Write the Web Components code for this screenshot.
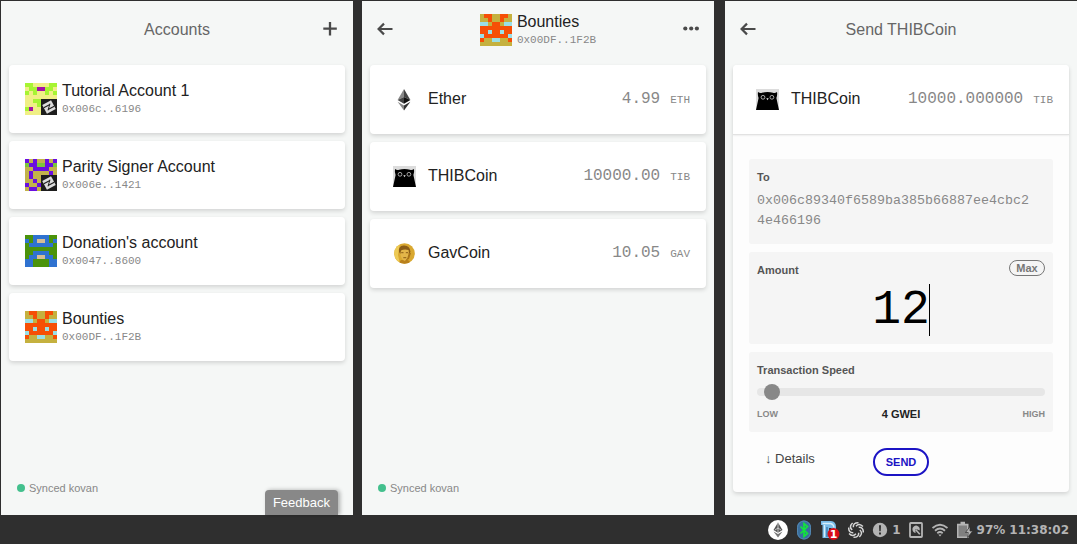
<!DOCTYPE html>
<html lang="en">
<head>
<meta charset="utf-8">
<title>Wallet</title>
<style>
html, body { margin: 0; background: #2f2f2f; }
body { font-family: "Liberation Sans", Arial, sans-serif; color: #222; }
</style>
</head>
<body>
<wallet-desktop></wallet-desktop>

<script>
const define = (name, html, setup) => customElements.define(name, class extends HTMLElement {
  connectedCallback() {
    if (this.shadowRoot) return;
    const root = this.attachShadow({ mode: 'open' });
    root.innerHTML = html;
    if (setup) setup(this, root);
  }
});

/* Mirrored 8x8 block avatar. "rows" holds the left half, one digit per colour. */
const AVATARS = {
  tutorial: { colors: ['#f0ef86', '#a6f432', '#a311a8'], rows: ['1100', '0112', '1010', '0000', '0011', '0001', '1200', '0000'] },
  signer: { colors: ['#c2b34b', '#6a0fe0', '#7cc63a'], rows: ['1010', '2112', '0011', '0100', '0100', '0010', '1001', '0110'] },
  donation: { colors: ['#4b930b', '#2f72d0', '#d6bd95'], rows: ['0011', '1012', '0111', '0000', '0011', '0112', '1100', '1100'] },
  bounties: { colors: ['#c5b13f', '#f64f06', '#9adfe6'], rows: ['0110', '0010', '2201', '1111', '1121', '2111', '1002', '0000'] }
};

define('block-avatar', `
<style>:host{display:block;width:32px;height:32px;flex:none}svg{display:block}</style>
<svg width="32" height="32" viewBox="0 0 32 32" aria-hidden="true"></svg>`, (el, root) => {
  const { colors, rows } = AVATARS[el.getAttribute('kind')];
  let out = '';
  rows.forEach((row, y) => {
    const full = row + [...row].reverse().join('');
    [...full].forEach((c, x) => {
      out += `<rect x="${x * 4}" y="${y * 4}" width="4" height="4" fill="${colors[c]}" shape-rendering="crispEdges"/>`;
    });
  });
  if (el.hasAttribute('signed')) out += `
    <rect x="16" y="16" width="16" height="16" fill="#1d1d1d"/>
    <g transform="rotate(-28 24 24)"><rect x="19" y="19" width="10" height="10" fill="#ddd"/>
    <path d="M19 22.2h7M22 25.8h7" stroke="#1d1d1d" stroke-width="1.1"/><path d="M26.5 21.5l-5 5" stroke="#1d1d1d" stroke-width=".9"/></g>`;
  root.querySelector('svg').innerHTML = out;
});

define('account-label', `
<style>
:host{display:flex;align-items:center;gap:5px}
.name{font-size:16px;line-height:20px;color:#222}
.addr{font:11px/16px "Liberation Mono",monospace;color:#888}
</style>
<div class="text"><div class="name"></div><div class="addr"></div></div>`, (el, root) => {
  root.querySelector('.name').textContent = el.getAttribute('name');
  root.querySelector('.addr').textContent = el.getAttribute('address');
  const avatar = document.createElement('block-avatar');
  avatar.setAttribute('kind', el.getAttribute('kind'));
  if (el.hasAttribute('signed')) avatar.setAttribute('signed', '');
  root.querySelector('.text').before(avatar);
});

define('wallet-card', `
<style>
:host{display:block;background:#fff;border-radius:4px;box-shadow:0 2px 4px rgba(0,0,0,.14)}
a{display:block;color:inherit;text-decoration:none}
</style><a href="#"><slot></slot></a>`);

const ICONS = {
  ether: `<svg width="14" height="22" viewBox="0 0 14 22"><path d="M7 0L.6 11 7 8z" fill="#888"/><path d="M7 0l6.400 11L7 8z" fill="#444"/><path d="M.6 11L7 8v6.800z" fill="#444"/><path d="M13.400 11L7 8v6.800z" fill="#111"/><path d="M.6 12.700L7 16.500V21.500z" fill="#888"/><path d="M13.400 12.700L7 16.500V21.500z" fill="#333"/></svg>`,
  thib: `<svg width="23" height="21" viewBox="0 0 23 21"><path fill="#dcdcdc" d="M0 0h23v21H0z"/><path d="M2 3q2 1.500 4 .8 5.500-1.500 11 0 2 .7 4-.8.5 3-.6 6L23 21H0L2.600 9Q1.500 6 2 3z"/><g fill="none" stroke="#ccc" stroke-width=".8"><circle cx="7" cy="8.300" r="1.900"/><circle cx="15.900" cy="8.300" r="1.900"/></g><path d="M10.300 9.300h2.400l-1.200 2z" fill="#eee"/></svg>`,
  gav: `<svg width="21" height="21" viewBox="0 0 21 21"><defs><clipPath id="c"><circle cx="10.500" cy="10.500" r="10.300"/></clipPath></defs><g clip-path="url(#c)"><path fill="#d9a830" d="M0 0h21v21H0z"/><path fill="#edca55" d="M0 0h6L4 12l2 9H0z"/><path fill="#b9811d" d="M4 21l3-4 7 0 4 4z"/><path fill="#e3b64a" d="M6 6q5-4 9 0l.5 6q-1 4-4.500 6-3.500-1-4.500-6z"/><path fill="#8a5d18" d="M5 9Q4 3 9.500 2.500 16 2 16.500 9l-1.400 2-.6-4Q10 6 7 7.500L6.300 11z"/><path d="M7.200 9.700h2.300M11.800 9.700h2.300M9.300 14.700h3" stroke="#8a5d18"/><path d="M14.500 10q0 5-3.500 8l4-2 2-6z" fill="#a87319"/></g></svg>`
};

define('token-row', `
<style>
:host{display:flex;align-items:center;gap:6px;height:69px;padding:0 16px}
.icon{width:36px;display:grid;place-items:center}
svg{display:block}
.name{font-size:16px;line-height:20px;flex:1;padding-bottom:2px;color:#222}
.value{font-family:"Liberation Mono",monospace;font-size:16px;line-height:20px;color:#888}
.unit{font-size:11px;margin-left:10px}
</style>
<div class="icon"></div><div class="name"></div>
<div class="value"><span class="amount"></span><span class="unit"></span></div>`, (el, root) => {
  root.querySelector('.icon').innerHTML = ICONS[el.getAttribute('icon')];
  for (const k of ['name', 'amount', 'unit']) root.querySelector('.' + k).textContent = el.getAttribute(k);
});

define('wallet-screen', `
<style>
:host{display:flex;flex-direction:column;position:relative;flex:1 1 0;min-width:0;background:#f5f7f6}
header{display:grid;grid-template-columns:16px 1fr 16px;align-items:center;height:58px;padding:0 15px}
.title{display:flex;justify-content:center;font-size:16px;line-height:20px;color:#666}
main{display:flex;flex-direction:column;gap:8px;padding:6px 8px 0;flex:1}
</style>
<header><slot name="start"><span></span></slot><div class="title"><slot name="title"></slot></div><slot name="end"><span></span></slot></header>
<main><slot></slot></main>
<slot name="status"></slot><slot name="overlay"></slot>`);

define('icon-button', `
<style>
:host{display:block;width:16px;height:16px}
button{display:block;border:0;padding:0;background:none;width:16px;height:16px}
svg{display:block}
</style><button type="button"><svg width="16" height="16" viewBox="0 0 16 16" fill="none" stroke="#4a4a4a" stroke-width="2"></svg></button>`, (el, root) => {
  root.querySelector('button').setAttribute('aria-label', el.getAttribute('label'));
  root.querySelector('svg').innerHTML = {
    plus: '<path d="M8 0v13.500M1.300 6.700h13.500" stroke-width="2.300"/>',
    back: '<path d="M1.500 7h14M7 1.600L1.600 7 7 12.400" stroke-width="2.200"/>',
    more: '<g fill="#4a4a4a" stroke="none"><circle cx="2.300" cy="6.500" r="2.100"/><circle cx="8.200" cy="6.500" r="2.100"/><circle cx="13.900" cy="6.500" r="2.100"/></g>'
  }[el.getAttribute('icon')];
});

define('sync-status', `
<style>
:host{display:flex;align-items:center;gap:4px;padding:0 16px 17px;font-size:11px;line-height:20px;color:#888}
i{width:8px;height:8px;border-radius:50%;background:#43c08d}
</style><i></i><slot></slot>`);

define('feedback-tab', `
<style>
:host{display:block;position:absolute;right:15px;bottom:0}
button{display:block;height:25px;padding:0 8px;border:0;border-radius:4px 4px 0 0;background:#888;color:#fff;font:13px/25px "Liberation Sans",Arial,sans-serif;box-shadow:2px 0 4px rgba(0,0,0,.3)}
</style><button type="button"><slot></slot></button>`);

define('form-field', `
<style>:host{display:block;position:relative;padding:8px;border-radius:3px;background:#f5f5f5}</style><slot></slot>`);

define('send-form', `
<style>
:host{display:block;background:#fdfdfd;border-radius:4px;box-shadow:0 2px 4px rgba(0,0,0,.14)}
token-row{background:#fff;border-bottom:1px solid #e2e2e2;border-radius:4px 4px 0 0;box-shadow:0 1px 2px rgba(0,0,0,.06)}
form{display:flex;flex-direction:column;gap:8px;padding:24px 16px 16px}
label{display:block;font-size:11px;line-height:20px;font-weight:bold;color:#555}
textarea{display:block;box-sizing:border-box;width:100%;height:49px;margin:0;padding:4px 12px 0 0;border:0;outline:0;resize:none;overflow:hidden;background:none;color:#888;font-family:"Liberation Mono",monospace;line-height:20px;word-break:break-all}
.amount{position:relative;font:48px/56px "Liberation Mono",monospace;color:#000}
.amount input{display:block;box-sizing:border-box;width:100%;height:56px;padding:4px 0 0;border:0;outline:0;background:none;font:inherit;color:inherit;text-align:center;caret-color:transparent}
.caret{position:absolute;left:calc(50% + 1ch);top:4px;width:1px;height:52px;margin-left:-1px;background:#000}
.max{position:absolute;top:8px;right:8px;height:16px;width:36px;padding:0;border:1px solid #777;border-radius:8px;background:none;color:#777;font:bold 11px/14px "Liberation Sans",Arial,sans-serif}
input[type=range]{-webkit-appearance:none;appearance:none;display:block;width:100%;height:16px;margin:4px 0;background:none}
input[type=range]::-webkit-slider-runnable-track{height:8px;border-radius:4px;background:#e6e6e6}
input[type=range]::-webkit-slider-thumb{-webkit-appearance:none;width:16px;height:16px;margin-top:-4px;border-radius:50%;background:#888}
.scale{display:grid;grid-template-columns:1fr auto 1fr;align-items:center;height:20px;font-size:9px;font-weight:bold;color:#888}
.scale output{font-size:11px;color:#222}
.scale span:last-child{text-align:right}
.actions{display:grid;grid-template-columns:1fr auto 1fr;align-items:start;margin-top:8px}
.actions a{padding-left:16px;font-size:13px;line-height:21px;color:#444;text-decoration:none}
.send{width:56px;height:28px;padding:0;border:2px solid #1c14c4;border-radius:14px;background:#fff;color:#1c14c4;font:bold 11px/24px "Liberation Sans",Arial,sans-serif}
</style>
<token-row icon="thib" name="THIBCoin" amount="10000.000000" unit="TIB"></token-row>
<form>
  <form-field><label for="to">To</label><textarea id="to" rows="2" spellcheck="false">0x006c89340f6589ba385b66887ee4cbc24e466196</textarea></form-field>
  <form-field><label for="amount">Amount</label><button class="max" type="button">Max</button>
    <div class="amount"><input id="amount" type="text" inputmode="decimal" value="12"><span class="caret"></span></div></form-field>
  <form-field><label for="speed">Transaction Speed</label><input id="speed" type="range" min="0" max="156" value="4">
    <div class="scale"><span>LOW</span><output for="speed">4 GWEI</output><span>HIGH</span></div></form-field>
  <div class="actions"><a href="#details">↓ Details</a><button class="send" type="button">SEND</button><span></span></div>
</form>`, (el, root) => {
  const speed = root.getElementById('speed');
  speed.addEventListener('input', () => { root.querySelector('output').textContent = speed.value + ' GWEI'; });
});

define('system-tray', `
<style>
:host{display:flex;align-items:center;justify-content:flex-end;gap:8px;height:29px;padding:0 8px;color:#b4b4b4;font:bold 12px/20px "DejaVu Sans",sans-serif}
svg{display:block;flex:none}
.group{display:flex;align-items:center;gap:4px}
</style>
<svg width="20" height="20" viewBox="0 0 20 20"><circle cx="10" cy="10" r="10" fill="#fff"/><path d="M10 2.500l4.500 7.500-4.500 2.700L5.500 10z" fill="#555"/><path d="M5.500 11.400l4.500 2.700 4.500-2.700-4.500 6.100z" fill="#777"/><path d="M10 2.500v10.200M7 10l3-2 3 2" stroke="#ddd" stroke-width=".8" fill="none"/></svg>
<svg width="16" height="20" viewBox="0 0 16 20"><rect x="1" y=".5" width="14" height="19" rx="7" fill="#3a6f9e"/><rect x="1.500" y="1" width="13" height="18" rx="6.500" fill="none" stroke="#5487b0"/><path d="M4.500 6.500l7 7L8 16.500v-13l3.500 3-7 7" fill="none" stroke="#12e53c" stroke-width="1.700"/></svg>
<svg width="20" height="20" viewBox="0 0 20 20"><path d="M1 1h10q5 .5 5 6v8h-4.500V8H9v10H2.500V5H1z" fill="#79bce8"/><path d="M4.500 17V5M2.500 3.500h8q3 .5 3.500 4" fill="none" stroke="#d7eefb" stroke-width="1.300"/><path d="M7 7v10" stroke="#2e6ea5" stroke-width="1.200"/><circle cx="13.500" cy="14" r="6" fill="#d80d17"/><text x="13.500" y="18" text-anchor="middle" font-family="DejaVu Sans" font-weight="bold" font-size="11" fill="#fff">1</text></svg>
<svg class="shutter" width="16" height="18" viewBox="0 0 16 18"></svg>
<div class="group"><svg width="16" height="16" viewBox="0 0 16 16"><circle cx="8" cy="8" r="7.200" fill="#b4b4b4"/><path d="M7 3.300h2l-.3 6H7.300zM7 10.500h2v2H7z" fill="#2f2f2f"/></svg><span>1</span></div>
<svg width="14" height="16" viewBox="0 0 14 16"><rect x="1" y="1" width="12" height="14" rx=".8" fill="none" stroke="#b4b4b4" stroke-width="1.800"/><path d="M6.600 11A3.700 3.700 0 1 1 10.600 8.500L8.500 7.500 6.200 7z" fill="#b4b4b4"/><path d="M6.500 7.500l4.300 4.800" stroke="#b4b4b4" stroke-width="1.600"/></svg>
<svg width="18" height="14" viewBox="0 0 18 14" fill="none" stroke="#b4b4b4" stroke-width="1.800"><path d="M1.500 5q7.500-6.500 15 0M4 7.700q5-4.400 10 0M6.300 10.200q2.700-2.300 5.400 0"/><path d="M7.300 11.500L9 13.500l1.700-2z" fill="#b4b4b4" stroke="none"/></svg>
<div class="group"><svg width="16" height="18" viewBox="0 0 16 18"><path d="M3.500 .8H8v2h3.500V17H0V2.800h3.500z" fill="#b4b4b4"/><path d="M1.500 4.500H10v11H1.500z" fill="#808080"/><path d="M13 5.500l-4.500 6h2.700L10.500 16.500l5.300-6.500H13z" fill="#b4b4b4" stroke="#2f2f2f" stroke-width=".7"/></svg><span>97%</span><time>11:38:02</time></div>`, (el, root) => {
  let blades = '';
  for (let i = 0; i < 8; i++) blades += `<path transform="rotate(${i * 45} 8 9)" d="M10.500 1.700Q5 1.500 5.300 6.300" fill="none" stroke="#d6d6d6" stroke-width="1.500"/>`;
  root.querySelector('.shutter').innerHTML = blades;
});

define('wallet-desktop', `
<style>
:host{display:flex;flex-direction:column;min-height:100vh}
.screens{display:flex;flex:1;padding:1px 0 0 1px}
wallet-screen:nth-child(2){margin-left:9px}
wallet-screen:nth-child(3){margin-left:11px}
.account{padding:16px}
</style>
<div class="screens">
  <wallet-screen>
    <span slot="title">Accounts</span><icon-button slot="end" icon="plus" label="Add account"></icon-button>
    <wallet-card><account-label class="account" kind="tutorial" signed name="Tutorial Account 1" address="0x006c..6196"></account-label></wallet-card>
    <wallet-card><account-label class="account" kind="signer" signed name="Parity Signer Account" address="0x006e..1421"></account-label></wallet-card>
    <wallet-card><account-label class="account" kind="donation" name="Donation's account" address="0x0047..8600"></account-label></wallet-card>
    <wallet-card><account-label class="account" kind="bounties" name="Bounties" address="0x00DF..1F2B"></account-label></wallet-card>
    <sync-status slot="status">Synced kovan</sync-status>
    <feedback-tab slot="overlay">Feedback</feedback-tab>
  </wallet-screen>
  <wallet-screen>
    <icon-button slot="start" icon="back" label="Back"></icon-button>
    <account-label slot="title" kind="bounties" name="Bounties" address="0x00DF..1F2B"></account-label>
    <icon-button slot="end" icon="more" label="More"></icon-button>
    <wallet-card><token-row icon="ether" name="Ether" amount="4.99" unit="ETH"></token-row></wallet-card>
    <wallet-card><token-row icon="thib" name="THIBCoin" amount="10000.00" unit="TIB"></token-row></wallet-card>
    <wallet-card><token-row icon="gav" name="GavCoin" amount="10.05" unit="GAV"></token-row></wallet-card>
    <sync-status slot="status">Synced kovan</sync-status>
  </wallet-screen>
  <wallet-screen>
    <icon-button slot="start" icon="back" label="Back"></icon-button>
    <span slot="title">Send THIBCoin</span>
    <send-form></send-form>
  </wallet-screen>
</div>
<system-tray></system-tray>`);
</script>
</body>
</html>
